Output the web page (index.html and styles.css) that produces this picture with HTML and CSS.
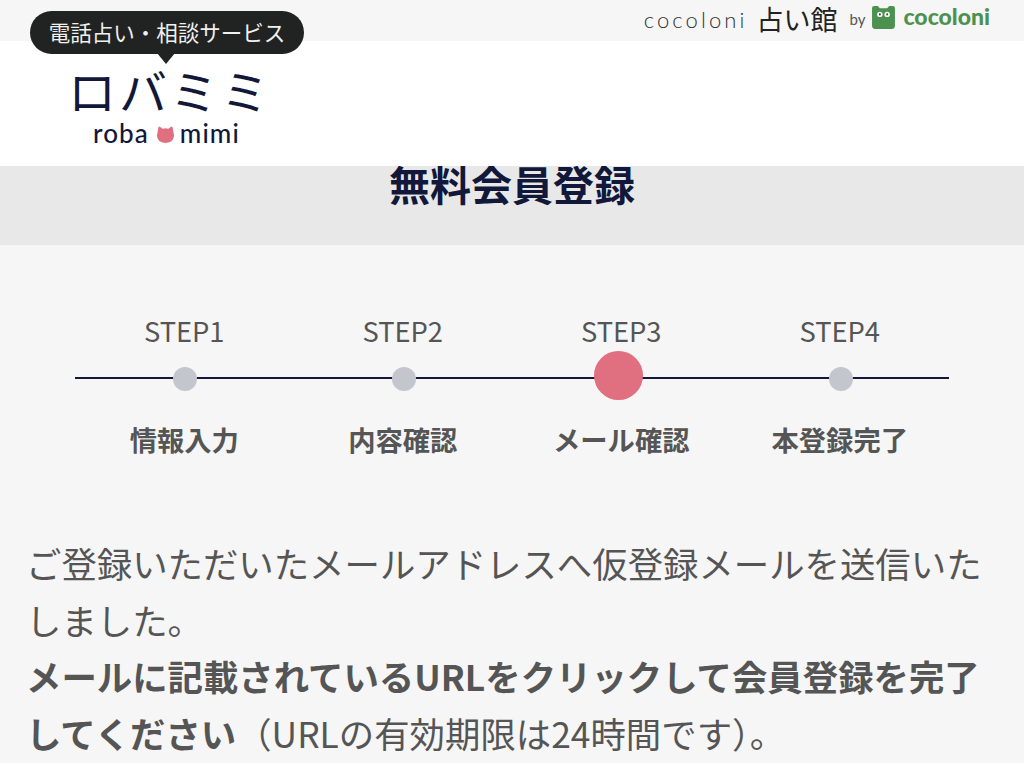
FILE: index.html
```html
<!DOCTYPE html>
<html lang="ja">
<head>
<meta charset="utf-8">
<title>無料会員登録</title>
<link rel="stylesheet" href="styles.css">
</head>
<body>
<div class="page">
  <div class="topbar">
    <div class="brand">
      <span class="brand-name">cocoloni</span>
      <span class="brand-jp">占い館</span>
      <span class="brand-by">by</span>
      <svg class="brand-icon" viewBox="0 0 24 24" aria-hidden="true">
        <path d="M3 1h3.5l2 2h7l2-2H21a2 2 0 0 1 2 2v17a3 3 0 0 1-3 3H4a3 3 0 0 1-3-3V3a2 2 0 0 1 2-2z" fill="#4d9150"/>
        <circle cx="8.5" cy="9" r="2.6" fill="#fff"/>
        <circle cx="15.5" cy="9" r="2.6" fill="#fff"/>
        <circle cx="8.5" cy="9" r="1" fill="#2e5a30"/>
        <circle cx="15.5" cy="9" r="1" fill="#2e5a30"/>
      </svg>
      <span class="brand-green">cocoloni</span>
    </div>
  </div>
  <header class="header">
    <div class="bubble">電話占い・相談サービス</div>
    <div class="logo-jp">ロバミミ</div>
    <div class="logo-en">
      <span>roba</span>
      <svg class="cat" viewBox="0 0 20 20" aria-hidden="true">
        <path d="M2.5 2.5Q3 1 4.5 2L7 4q3-1 6 0l2.500-2q1.500-1 2 .5L19 11q0 7-9 8-9-1-9-8z" fill="#e0707f"/>
      </svg>
      <span>mimi</span>
    </div>
  </header>
  <div class="title-band"><h1>無料会員登録</h1></div>
  <ol class="steps">
    <li class="step">
      <span class="step-no">STEP1</span>
      <span class="dot-row"><span class="dot"></span></span>
      <span class="step-name">情報入力</span>
    </li>
    <li class="step">
      <span class="step-no">STEP2</span>
      <span class="dot-row"><span class="dot"></span></span>
      <span class="step-name">内容確認</span>
    </li>
    <li class="step">
      <span class="step-no">STEP3</span>
      <span class="dot-row"><span class="dot dot-current"></span></span>
      <span class="step-name">メール確認</span>
    </li>
    <li class="step">
      <span class="step-no">STEP4</span>
      <span class="dot-row"><span class="dot"></span></span>
      <span class="step-name">本登録完了</span>
    </li>
  </ol>
  <p class="message">ご登録いただいたメールアドレスへ仮登録メールを送信いたしました。<br><strong>メールに記載されているURLをクリックして会員登録を完了してください</strong>（URLの有効期限は24時間です）。</p>
</div>
</body>
</html>
```
FILE: styles.css
```css
* { box-sizing: border-box; }
html, body { margin: 0; padding: 0; }
body {
  background: #f6f6f6;
  font-family: "Noto Sans CJK JP", "Noto Sans", sans-serif;
  color: #555;
}
.page { width: 1024px; height: 763px; overflow: hidden; }
.topbar { height: 41px; display: flex; justify-content: flex-end; padding-right: 34px; }
.brand { display: flex; align-items: center; height: 36px; color: #333; }
.brand-name { font-family: "Lato", sans-serif; font-size: 22px; font-weight: 300; letter-spacing: 3.1px; margin-right: 9px; padding-top: 2px; }
.brand-jp { font-size: 27px; font-weight: 400; color: #222; margin-right: 12px; }
.brand-by { font-family: "Lato", sans-serif; font-size: 15px; margin-right: 6px; color: #555; padding-top: 2px; }
.brand-icon { width: 25px; height: 25px; margin: 0 7px 1px 0; }
.brand-green { font-family: "Lato", sans-serif; font-weight: 900; font-size: 23px; color: #4d9150; padding-bottom: 4px; }
.header { height: 125px; background: #fff; display: flex; flex-direction: column; align-items: flex-start; position: relative; }
.bubble {
  position: absolute; left: 30px; top: -30px;
  width: 274px; height: 43px; border-radius: 22px;
  background: #212322; color: #f0f0f0;
  font-size: 21.5px; line-height: 42px; text-align: center;
  white-space: nowrap;
}
.bubble::after {
  content: ""; position: absolute; left: 127px; top: 42px;
  border-left: 9px solid transparent; border-right: 9px solid transparent;
  border-top: 11px solid #212322;
}
.logo-jp {
  margin: 18px 0 0 68px; width: 200px; height: 60px;
  font-size: 48px; line-height: 60px; letter-spacing: 3px; font-weight: 400; color: #12183a; white-space: nowrap;
}
.logo-en {
  margin: -2px 0 0 93px; display: flex; align-items: center;
  font-family: "Lato", sans-serif; font-size: 26px; line-height: 32px; color: #12183a; letter-spacing: 1.1px; font-weight: 500;
}
.cat { width: 19px; height: 19px; margin: 2px 5px 0 7px; }
.title-band { height: 79px; background: #e8e8e8; display: flow-root; }
.title-band h1 {
  margin: -9px 0 0; text-align: center; font-size: 41px; line-height: 52px; font-weight: 700; color: #12183a;
}
.steps {
  list-style: none; margin: 67px 75px 0; padding: 0;
  display: grid; grid-template-columns: repeat(4, 1fr);
  background: linear-gradient(#12183a, #12183a) 0 65px / 100% 2px no-repeat;
}
.step { display: flex; flex-direction: column; align-items: center; }
.step-no { font-size: 27.3px; line-height: 36px; color: #555; }
.dot-row { height: 50px; margin-top: 2px; display: flex; align-items: center; }
.dot { width: 24px; height: 24px; border-radius: 50%; background: #c3c6cd; margin: 8px 0 0 2px; }
.dot-current { width: 49px; height: 49px; background: #e0707f; margin: 0 6px 0 0; }
.step-name { margin-top: 21px; font-size: 27.3px; line-height: 36px; font-weight: 700; color: #555; }
.message { margin: 78px 28px 0 26px; font-size: 35.4px; line-height: 56.5px; color: #555; }
.message strong { font-weight: 700; }
```
